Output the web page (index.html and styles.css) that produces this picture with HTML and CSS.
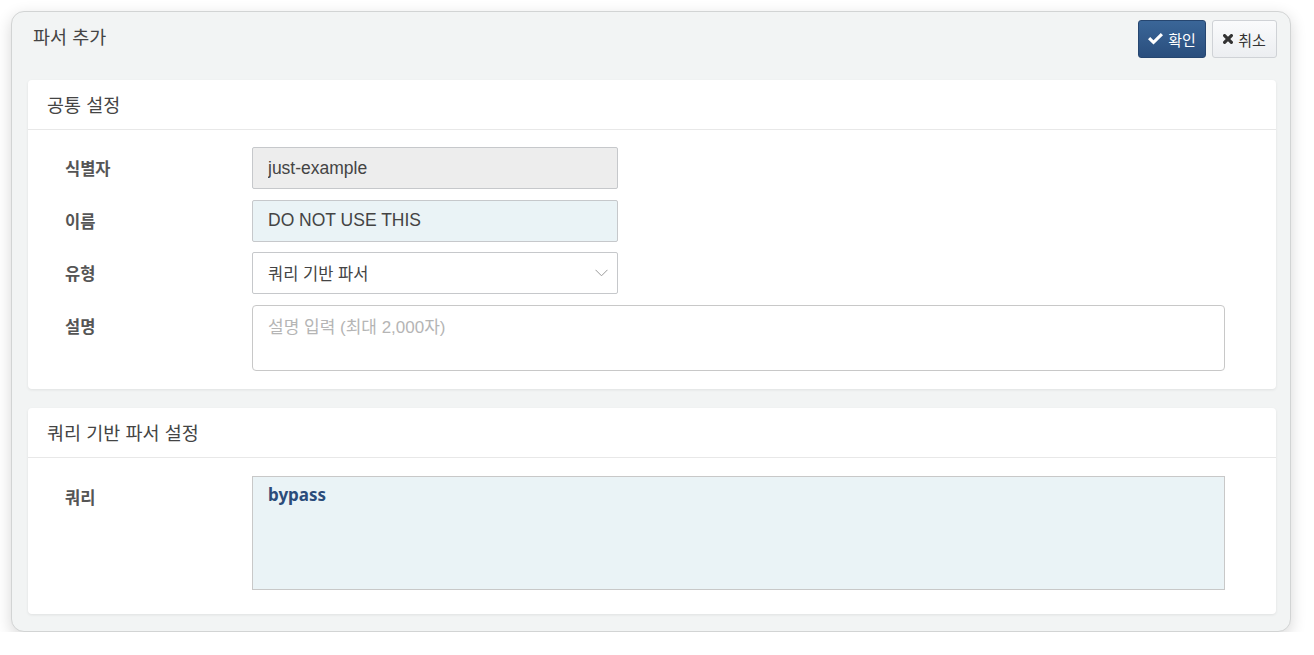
FILE: index.html
```html
<!DOCTYPE html>
<html lang="ko">
    <head>
        <meta charset="UTF-8">
        <title>파서 추가</title>
        <link rel="stylesheet" href="styles.css">
    </head>
    <body>
        <div class="panel">
            <div class="panel_head">
                <div class="panel_title">파서 추가</div>
                <div class="btns">
                    <button class="btn btn_ok">
                        <svg width="15" height="12" viewBox="0 0 15 12"><polygon points="0,6.2 2.2,4 5.5,7.2 12.8,0 15,2.2 5.5,11.6" fill="#fff"/></svg>
                        확인
                    </button>
                    <button class="btn btn_cancel">
                        <svg width="10" height="10" viewBox="0 0 10 10"><path d="M1.6 1.6 L8.4 8.4 M8.4 1.6 L1.6 8.4" stroke="#333" stroke-width="3.2" stroke-linecap="round"/></svg>
                        취소
                    </button>
                </div>
            </div>

            <div class="card">
                <div class="card_head">공통 설정</div>
                <div class="card_body">
                    <div class="row">
                        <label class="lbl">식별자</label>
                        <input class="field field_ro" type="text" value="just-example" readonly>
                    </div>
                    <div class="row">
                        <label class="lbl">이름</label>
                        <input class="field field_fill" type="text" value="DO NOT USE THIS">
                    </div>
                    <div class="row">
                        <label class="lbl">유형</label>
                        <div class="field select">
                            <span>쿼리 기반 파서</span>
                            <svg width="13" height="8" viewBox="0 0 13 8"><path d="M0.5 0.8 L6.5 6.8 L12.5 0.8" fill="none" stroke="#999" stroke-width="1"/></svg>
                        </div>
                    </div>
                    <div class="row">
                        <label class="lbl">설명</label>
                        <textarea class="area area_desc" placeholder="설명 입력 (최대 2,000자)"></textarea>
                    </div>
                </div>
            </div>

            <div class="card">
                <div class="card_head">쿼리 기반 파서 설정</div>
                <div class="card_body card_body_last">
                    <div class="row">
                        <label class="lbl">쿼리</label>
                        <div class="area area_query">bypass</div>
                    </div>
                </div>
            </div>
        </div>
    </body>
</html>
```
FILE: styles.css
```css
body{
    margin: 0;
    background-color: #fff;
    font-family: "Noto Sans CJK KR", "Noto Sans", sans-serif;
    color: #444;
}

.panel{
    margin: 11px 0 0 11px;
    width: 1280px;
    height: 621px;
    box-sizing: border-box;
    background-color: #f2f4f4;
    border: 1px solid #d2d4d4;
    border-radius: 13px;
    box-shadow: 0 5px 16px rgba(0,0,0,0.16);
    padding: 0 13px 0 16px;
}

.panel_head{
    display: flex;
    justify-content: space-between;
    align-items: flex-start;
    height: 68px;
}

.panel_title{
    font-size: 18.5px;
    margin: 11px 0 0 5px;
    color: #444;
}

.btns{
    display: flex;
    gap: 6px;
    margin-top: 8px;
}

.btn{
    display: flex;
    align-items: center;
    justify-content: center;
    gap: 5px;
    height: 38px;
    border-radius: 3px;
    font-family: "Noto Sans CJK KR", sans-serif;
    font-size: 15px;
    padding: 0;
    box-sizing: border-box;
}

.btn_ok{
    width: 68px;
    background: linear-gradient(#3a6698, #2a4e7d);
    border: 1px solid #264670;
    color: #fff;
}

.btn_cancel{
    width: 65px;
    background: linear-gradient(#fafbfc, #eceef1);
    border: 1px solid #cfd2d6;
    color: #333;
}

.card{
    width: 1248px;
    background-color: #fff;
    border-radius: 4px;
    box-shadow: 0 1px 3px rgba(0,0,0,0.08);
    margin-bottom: 19px;
}

.card_head{
    height: 49px;
    line-height: 48px;
    padding-left: 19px;
    font-size: 18.5px;
    color: #444;
    border-bottom: 1px solid #e8e8e8;
}

.card_body{
    padding: 17px 0 18.5px 37px;
    display: flex;
    flex-direction: column;
    gap: 10.5px;
}

.card_body_last{
    padding-top: 18px;
    padding-bottom: 24px;
}

.row{
    display: flex;
    align-items: flex-start;
}

.lbl{
    width: 187px;
    flex: none;
    font-size: 16.5px;
    font-weight: bold;
    color: #555;
    padding-top: 9px;
}

.field{
    width: 366px;
    height: 42px;
    box-sizing: border-box;
    border: 1px solid #c6c8cb;
    border-radius: 2px;
    padding: 0 15px;
    font-family: "Liberation Sans", "Noto Sans CJK KR", sans-serif;
    font-size: 17.5px;
    color: #444;
    outline: none;
}

.field_ro{
    background-color: #ededed;
}

.field_fill{
    background-color: #eaf3f6;
}

.select{
    display: flex;
    align-items: center;
    justify-content: space-between;
    background-color: #fff;
    font-family: "Noto Sans CJK KR", sans-serif;
    font-size: 16.5px;
    padding-right: 9px;
}

.area{
    width: 973px;
    box-sizing: border-box;
    border: 1px solid #c8c8c8;
    padding: 7px 15px;
    resize: none;
    outline: none;
}

.area_desc{
    height: 66px;
    border-radius: 4px;
    font-family: "Liberation Sans", "Noto Sans CJK KR", sans-serif;
    font-size: 17px;
}

.area_desc::placeholder{
    color: #b5b5b5;
}

.area_query{
    height: 114px;
    background-color: #eaf3f6;
    font-family: "Noto Sans", sans-serif;
    font-weight: bold;
    font-size: 17px;
    color: #2b4c7a;
    padding-top: 6px;
    line-height: 24px;
}
```
